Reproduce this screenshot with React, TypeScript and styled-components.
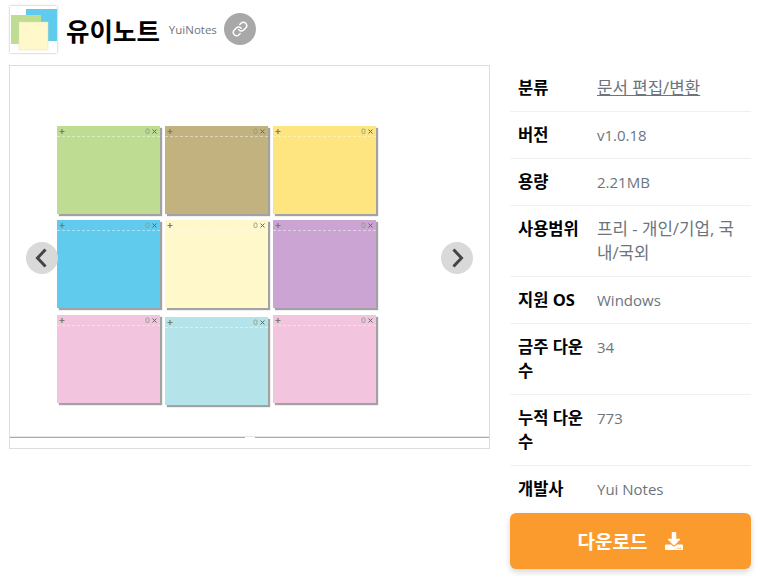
import React from 'react';
import styled, {createGlobalStyle} from "styled-components";
import {FaDownload} from "react-icons/fa";
import {Link} from "lucide-react";

const notes = [
    {color: "#bfdc93", top: 0},
    {color: "#c1b27f", top: 0},
    {color: "#fee57f", top: 0},
    {color: "#61cbee", top: 0},
    {color: "#fef8cb", top: 0},
    {color: "#cca4d3", top: 0},
    {color: "#f2c4de", top: 1},
    {color: "#b4e3e9", top: 3},
    {color: "#f2c4de", top: 1},
];

const specs = [
    {label: "분류", value: "문서 편집/변환", link: true, hangul: true},
    {label: "버전", value: "v1.0.18"},
    {label: "용량", value: "2.21MB"},
    {label: "사용범위", value: "프리 - 개인/기업, 국내/국외", hangul: true},
    {label: "지원 OS", value: "Windows"},
    {label: "금주 다운수", value: "34"},
    {label: "누적 다운수", value: "773"},
    {label: "개발사", value: "Yui Notes"},
];

const AppLogo = () => (
    <LogoFrame>
        <svg width="46" height="46" viewBox="0 0 46 46">
            <rect x="15" y="3" width="31" height="32" fill="#61cbee"/>
            <rect x="0" y="9" width="30" height="29" fill="#bfdc93"/>
            <rect x="8" y="16" width="29" height="28" fill="#fef8cb" stroke="#e6e0b4" strokeWidth="0.5"/>
        </svg>
    </LogoFrame>
);

const NoteIcons = () => (
    <NoteBar viewBox="0 0 103 10" width="103" height="10">
        <path d="M2.500 5.500h5M5 3v5" stroke="#6f7f70" strokeWidth="1.200"/>
        <rect x="89" y="3" width="3" height="4.500" rx="1" fill="none" stroke="#8a9a8a" strokeWidth="0.800"/>
        <path d="M95.500 3.500l4 4M99.500 3.500l-4 4" stroke="#5c6a60" strokeWidth="1"/>
    </NoteBar>
);

const Arrow = ({side}: { side: "left" | "right" }) => (
    <NavButton $side={side}>
        <svg width="14" height="20" viewBox="0 0 14 20">
            <polyline
                points={side === "left" ? "10.500,1.500 2.500,10 10.500,18.500" : "3.500,1.500 11.500,10 3.500,18.500"}
                fill="none"
                stroke="#444"
                strokeWidth="3"
            />
        </svg>
    </NavButton>
);

export default function App() {
    return (
        <Page>
            <GlobalStyle/>
            <Header>
                <AppLogo/>
                <Title>유이노트</Title>
                <Subtitle>YuiNotes</Subtitle>
                <LinkBadge><Link size={16} color="#fff" strokeWidth={2.2}/></LinkBadge>
            </Header>
            <Content>
                <Gallery>
                    <NoteGrid>
                        {notes.map((note, i) => (
                            <Note key={i} $color={note.color} $top={note.top}>
                                <NoteIcons/>
                                <NoteRule/>
                            </Note>
                        ))}
                    </NoteGrid>
                    <Track>
                        <TrackPart $width="235px"/>
                        <TrackGap/>
                        <TrackPart $width="auto"/>
                    </Track>
                    <Arrow side="left"/>
                    <Arrow side="right"/>
                </Gallery>
                <Side>
                    <SpecList>
                        {specs.map((spec, i) => (
                            <SpecRow key={spec.label} $last={i === specs.length - 1}>
                                <SpecLabel>{spec.label}</SpecLabel>
                                <SpecValue $link={spec.link} $hangul={spec.hangul}>{spec.value}</SpecValue>
                            </SpecRow>
                        ))}
                    </SpecList>
                    <DownloadButton>
                        다운로드
                        <FaDownload size={18}/>
                    </DownloadButton>
                </Side>
            </Content>
        </Page>
    );
}

const fontStack = `"Open Sans", "Noto Sans CJK KR", sans-serif`;

const GlobalStyle = createGlobalStyle`
  html, body {
    margin: 0;
    background: #fff;
  }

  * {
    box-sizing: border-box;
  }
`

const Page = styled.div`
  width: 762px;
  height: 576px;
  overflow: hidden;
  padding: 5px 11px 0 9px;
  font-family: ${fontStack};
`

const Header = styled.header`
  display: flex;
  align-items: center;
  height: 48px;
  padding-left: 1px;
`

const LogoFrame = styled.div`
  width: 47px;
  height: 47px;
  background: #fff;
  box-shadow: 0 0 2px rgba(0, 0, 0, .35);
  line-height: 0;
  padding-left: 1px;
  margin-right: 9px;
`

const Title = styled.h1`
  margin: 0 9px 0 0;
  font-size: 25.500px;
  font-weight: 700;
  color: #000;
`

const Subtitle = styled.span`
  font-size: 11.500px;
  color: #6c757d;
  margin-right: 7px;
`

const LinkBadge = styled.span`
  display: flex;
  align-items: center;
  justify-content: center;
  width: 32px;
  height: 32px;
  border-radius: 50%;
  background: #a8a8a8;
`

const Content = styled.div`
  display: flex;
  gap: 20px;
  margin-top: 12px;
`

const Gallery = styled.div`
  position: relative;
  flex: none;
  width: 481px;
  height: 384px;
  border: 1px solid #ddd;
  padding-top: 60px;
`

const NoteGrid = styled.div`
  display: grid;
  grid-template-columns: repeat(3, 104px);
  grid-auto-rows: 89px;
  column-gap: 4px;
  row-gap: 5px;
  margin-left: 47px;
`

const Note = styled.div<{ $color: string; $top: number }>`
  width: 103px;
  height: 88px;
  margin-top: ${props => props.$top}px;
  background: ${props => props.$color};
  box-shadow: 2px 2px 1px #a2a2a2;
`

const NoteBar = styled.svg`
  display: block;
`

const NoteRule = styled.div`
  border-top: 1px dashed rgba(255, 255, 255, .45);
`

const Track = styled.div`
  display: flex;
  margin-top: 33px;
  border-top: 1px solid #e8e8e8;
`

const TrackPart = styled.div<{ $width: string }>`
  flex: ${props => props.$width === "auto" ? "1" : "none"};
  width: ${props => props.$width};
  height: 1px;
  background: #aaa;
`

const TrackGap = styled.div`
  width: 10px;
`

const NavButton = styled.button<{ $side: "left" | "right" }>`
  position: absolute;
  top: 176px;
  ${props => props.$side}: 16px;
  display: flex;
  align-items: center;
  justify-content: center;
  width: 32px;
  height: 32px;
  padding: 0;
  border: 0;
  border-radius: 50%;
  background: #d9d9d9;
`

const Side = styled.div`
  flex: none;
  width: 241px;
`

const SpecList = styled.div`
  display: flex;
  flex-direction: column;
`

const SpecRow = styled.div<{ $last?: boolean }>`
  display: flex;
  padding: 11px 8px ${props => props.$last ? 12 : 11}px;
  border-bottom: ${props => props.$last ? "0" : "1px solid #eef0f4"};
  line-height: 24px;
`

const SpecLabel = styled.div`
  flex: none;
  width: 79px;
  padding-right: 8px;
  font-size: 16.500px;
  font-weight: 700;
  color: #000;
`

const SpecValue = styled.div<{ $link?: boolean; $hangul?: boolean }>`
  flex: 1;
  font-size: ${props => props.$hangul ? 16.8 : 15}px;
  color: #6c757d;
  text-decoration: ${props => props.$link ? "underline" : "none"};
`

const DownloadButton = styled.button`
  display: flex;
  align-items: center;
  justify-content: center;
  gap: 18px;
  width: 100%;
  height: 56px;
  border: 0;
  border-radius: 6px;
  background: #fb9b2d;
  color: #fff;
  font-family: ${fontStack};
  font-size: 19px;
  font-weight: 700;
  box-shadow: 0 3px 6px rgba(0, 0, 0, .16);
`
